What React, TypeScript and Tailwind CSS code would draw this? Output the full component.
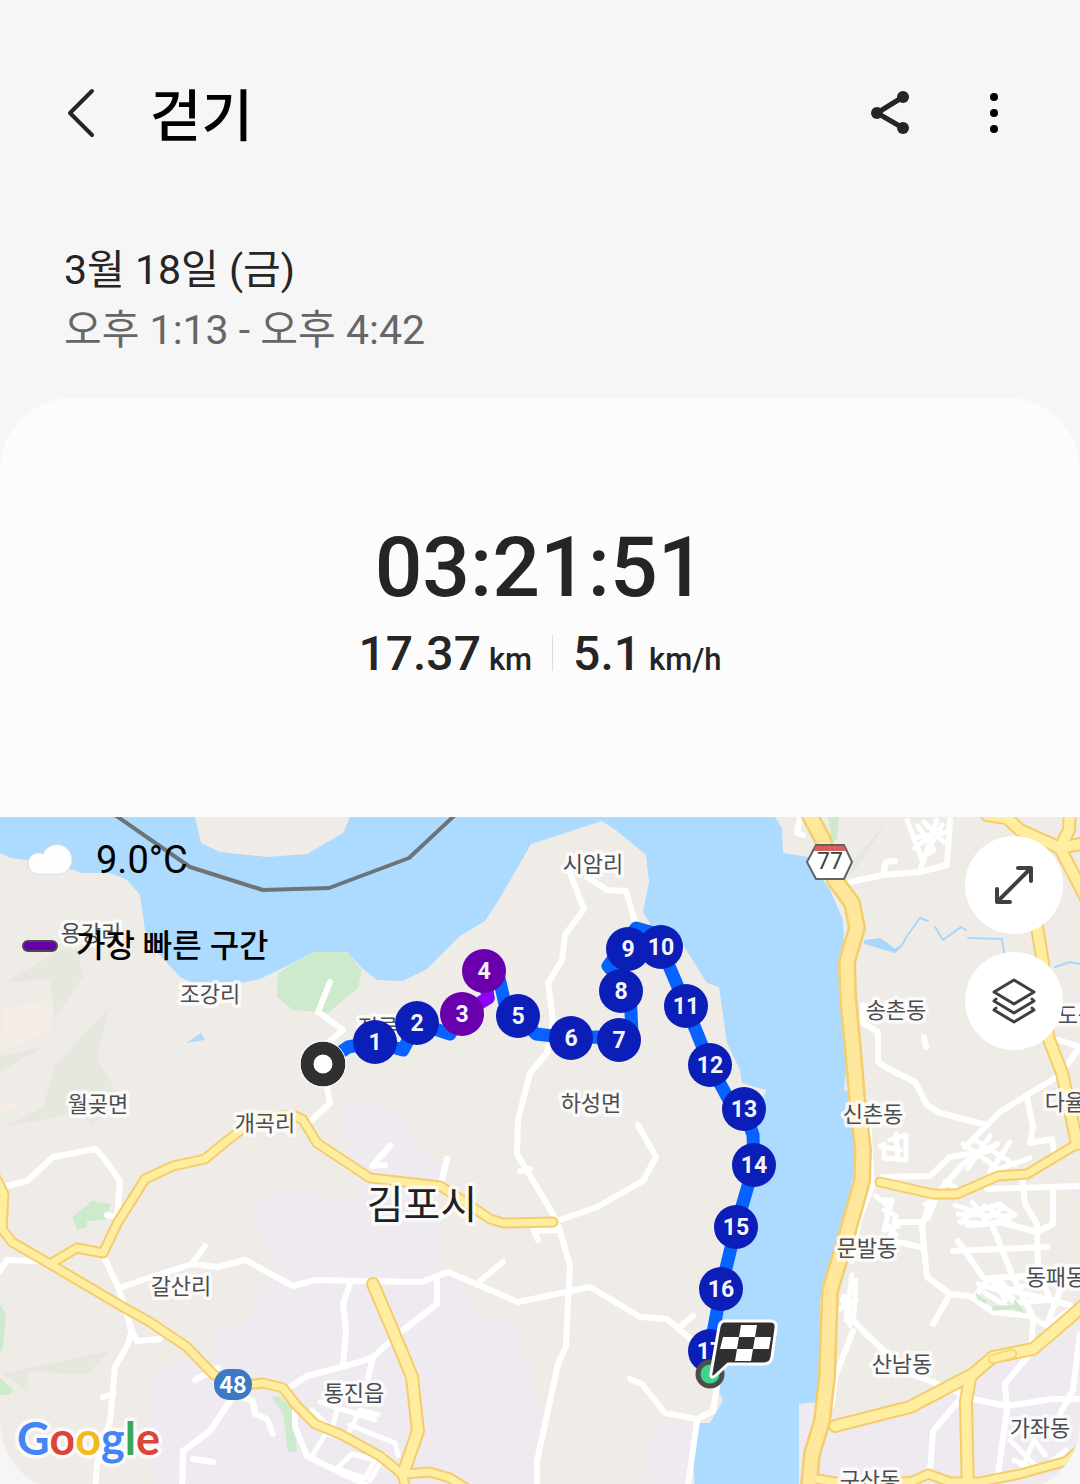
import React from 'react';

interface MapLabel {
  text: string;
  x: number;
  y: number;
}

interface Marker {
  km: number;
  x: number;
  y: number;
  fastest?: boolean;
}

const labels: MapLabel[] = [
  { text: '용강리', x: 91, y: 933 },
  { text: '조강리', x: 210, y: 994 },
  { text: '월곶면', x: 98, y: 1104 },
  { text: '개곡리', x: 265, y: 1123 },
  { text: '전류리', x: 388, y: 1027 },
  { text: '시암리', x: 593, y: 864 },
  { text: '하성면', x: 591, y: 1103 },
  { text: '송촌동', x: 896, y: 1010 },
  { text: '신촌동', x: 873, y: 1114 },
  { text: '도곡동', x: 1088, y: 1015 },
  { text: '다율동', x: 1075, y: 1102 },
  { text: '문발동', x: 867, y: 1248 },
  { text: '동패동', x: 1056, y: 1277 },
  { text: '산남동', x: 902, y: 1364 },
  { text: '가좌동', x: 1040, y: 1428 },
  { text: '구산동', x: 870, y: 1480 },
  { text: '갈산리', x: 181, y: 1286 },
  { text: '통진읍', x: 354, y: 1393 },
];

const markers: Marker[] = [
  { km: 1, x: 375, y: 1042 },
  { km: 2, x: 417, y: 1023 },
  { km: 3, x: 462, y: 1014, fastest: true },
  { km: 4, x: 484, y: 971, fastest: true },
  { km: 5, x: 518, y: 1016 },
  { km: 6, x: 571, y: 1038 },
  { km: 7, x: 619, y: 1040 },
  { km: 8, x: 621, y: 991 },
  { km: 10, x: 661, y: 947 },
  { km: 9, x: 628, y: 949 },
  { km: 11, x: 686, y: 1006 },
  { km: 12, x: 710, y: 1065 },
  { km: 13, x: 744, y: 1109 },
  { km: 14, x: 754, y: 1165 },
  { km: 15, x: 736, y: 1227 },
  { km: 16, x: 721, y: 1289 },
  { km: 17, x: 710, y: 1351 },
];

// Small local roads
const minorRoads = [
  'M330 982L318 1012L343 1030L323 1047L327 1087L330 1103L310 1122',
  'M7 1186L27 1181L53 1157L95 1149L102 1156L120 1181L117 1217L107 1215',
  'M0 1271L7 1260L37 1261',
  'M105 1259L118 1287L132 1331L128 1344L115 1367L110 1421L97 1464L95 1493',
  'M103 1397L113 1394',
  'M122 1287L145 1279L192 1264L217 1267L245 1260L293 1286L315 1280L360 1281L422 1282L448 1272L518 1302L590 1287L640 1317L667 1319L693 1341L705 1360',
  'M192 1264L205 1246',
  'M480 1281L503 1262',
  'M130 1328L137 1341L160 1339',
  'M350 1284L343 1304L346 1331L343 1364',
  'M283 1392L307 1376L360 1362L373 1357L402 1331L437 1304L437 1277',
  'M373 1357L368 1378',
  'M230 1401L210 1431L183 1451L182 1493',
  'M195 1380L218 1368',
  'M193 1459L213 1462',
  'M245 1398L253 1401L255 1414L267 1419L273 1434',
  'M295 1407L295 1427L307 1456L360 1482L380 1493',
  'M570 873L584 909L565 935L562 960L548 983L553 1020L547 1053L530 1073L518 1120L517 1154L553 1214L560 1231L570 1266L568 1301L566 1346L558 1364L537 1461L537 1493',
  'M587 877L607 890L626 891L635 922',
  'M557 1221L597 1207L643 1181L656 1157L638 1125',
  'M538 1240L534 1231L560 1230',
  'M520 1171L530 1169',
  'M630 1379L642 1384L665 1413L697 1419L713 1411L718 1380',
  'M697 1421L687 1493',
  'M680 1327L693 1316',
  'M390 1146L372 1166L385 1165',
  'M442 1179L447 1159',
  'M850 882L883 875L920 872L947 865L950 820',
  'M883 875L886 862L895 861',
  'M800 817L797 833L803 835',
  'M863 1005L863 1023L878 1032L878 1062L887 1068L915 1082L927 1105L940 1113L987 1125',
  'M965 1147L1000 1112L1027 1095L1057 1077',
  'M1027 1097L1033 1127L1030 1143L1052 1139L1055 1160',
  'M924 1037L926 1047',
  'M1058 1040L1080 1047L1067 1065',
  'M868 1120L872 1187L858 1222L852 1261',
  'M853 1331L835 1377L832 1405',
  'M850 1317L863 1331L880 1347L910 1374L933 1382L962 1394',
  'M895 1222L923 1222M893 1241L920 1247',
  'M930 1202L922 1227L927 1277L950 1294L970 1296L993 1312L1030 1316L1047 1326L1070 1310',
  'M950 1294L933 1324',
  'M883 1177L930 1176L950 1157L987 1151',
  'M937 1194L963 1164L997 1144',
  'M1022 1177L1025 1204L1037 1224L1038 1267L1050 1300',
  'M987 1189L1080 1186M1053 1190L1053 1224L1037 1232L1000 1222',
  'M993 1227L1013 1277L1033 1317L1032 1341',
  'M953 1251L1047 1247M958 1241L983 1277L1010 1290L1070 1305',
  'M975 1296L990 1278L1030 1276M1000 1280L1015 1303L1045 1300M1060 1290L1048 1322',
  'M1027 1357L1005 1384L1007 1411L998 1474',
  'M973 1399L1007 1406L1053 1399L1080 1399',
  'M962 1397L933 1431L930 1471',
  'M1080 1334L1073 1390L1060 1414',
];

// Dense street blocks around the towns
const blockRoads = [
  'M907 820L923 862L937 820M914 838L948 832M920 870L932 835L915 848M928 850L942 825M918 826L934 850L922 858M924 822L944 842',
  'M884 1144L884 1158L906 1160L906 1135L890 1140M880 1146L900 1150M896 1134L898 1160',
  'M876 1196L888 1206L886 1224L896 1235M880 1200L892 1200L884 1230L898 1226M884 1210L896 1216L890 1238',
  'M852 1275L846 1320M856 1280L854 1315L842 1300M838 1310L856 1300M844 1296L850 1326',
  'M955 1205L975 1212L1000 1204L1015 1215L990 1224L960 1222L985 1206L1010 1222L968 1226M958 1214L1008 1216M972 1202L985 1220L1002 1208',
  'M963 1144L1000 1170M975 1140L1015 1165M990 1136L968 1168M1010 1142L990 1172L1030 1158',
  'M925 1204L935 1202L928 1218',
  'M312 1410L335 1432L355 1446M320 1402L375 1420M330 1435L340 1400M345 1440L360 1410L378 1415M350 1425L395 1443L398 1455M312 1456L328 1430M335 1470L352 1454L375 1460L365 1478L340 1470M370 1480L385 1455',
  'M1010 1440L1040 1470L1066 1450M1020 1474L1034 1440L1045 1455M1014 1460L1030 1468',
  'M945 1182L960 1190M985 1293L1005 1305M978 1284L1004 1292L1024 1286M990 1278L1006 1300',
];

const yellowRoads = [
  'M50 1264L77 1248L103 1253L118 1222L145 1179L173 1166L205 1159L223 1144L255 1119L293 1115L303 1120L317 1143L352 1166L370 1178L440 1186L453 1194L490 1219L503 1223L553 1222',
  'M-4 1178L4 1194L2 1229L12 1242L50 1264L123 1307L150 1322L187 1347L213 1374L233 1386L263 1383L283 1388L297 1406L315 1424L340 1434L380 1456L402 1474L408 1496',
  'M880 1182L933 1194L957 1194L998 1176L1027 1174L1077 1144L1090 1138',
  'M817 1479L860 1486L913 1481L928 1474L950 1482L980 1482L1020 1474L1067 1461L1090 1440',
  'M403 1474L430 1472L450 1478L475 1494',
];

const wideRoads = [
  'M373 1284L393 1331L412 1377L418 1431L403 1474',
  'M987 815L1007 818L1020 830L1060 848L1090 842',
  'M1070 810L1069 830L1060 848L1090 906',
  'M1034 900L1037 927L1043 963L1048 1037L1062 1073L1070 1110L1077 1144',
  'M835 1426L910 1407L973 1374L993 1357L1033 1349L1060 1326L1090 1300',
  'M970 1378L966 1401L968 1496',
];

const highway =
  'M808 812L823 840L835 880L852 903L857 928L847 962L848 997L853 1050L857 1097L863 1150L862 1181L848 1231L830 1291L827 1377L822 1421L812 1454L808 1496';

const routePath =
  'M323 1064L348 1047L375 1042L403 1050L417 1023L450 1034L462 1014L488 998L484 971L499 978L505 1004L518 1016L536 1034L571 1038L597 1037L619 1040L632 1034L630 991L608 966L636 928L661 935L661 947L686 1006L710 1065L730 1102L744 1109L753 1135L754 1165L736 1227L721 1289L710 1350L710 1374';

const TrackMap: React.FC = () => (
  <svg
    viewBox="0 817 1080 676"
    className="block h-auto w-full"
    role="img"
    aria-label="김포시"
    fill="none"
    strokeLinejoin="round"
    strokeLinecap="round"
  >
    <rect x="0" y="817" width="1080" height="676" fill="#efece7" />

    {/* Built-up areas */}
    <g fill="#eeeaef">
      <path d="M338 1120L352 1100L385 1108L408 1125L418 1148L440 1165L438 1229L437 1254L450 1270L483 1314L518 1326L520 1361L532 1364L533 1394L543 1407L537 1493H157L147 1421V1391L167 1364L213 1357V1334L250 1321L260 1281L277 1267L257 1237L255 1199L300 1186L320 1197L360 1200L345 1150Z" />
      <path d="M653 1427L697 1422L690 1493H638L645 1470Z" />
      <path d="M799 1404L830 1400L840 1425L960 1375L1035 1350L1080 1330V1493H799Z" />
    </g>

    {/* Hills and parks */}
    <g fill="#e6e7df">
      <path d="M5 982L60 950H78L83 977L55 1018L50 980Z" />
      <path d="M109 1008L97 1058L117 1093L93 1127L80 1113L5 1127L43 1107L55 1065Z" />
      <path d="M0 1057L47 1045L0 1072Z" />
      <path d="M0 1374L110 1351L88 1374L28 1372L27 1392L10 1378Z" />
      <path d="M887 822L853 873L847 867Z" />
    </g>
    <g fill="#f7ede7">
      <path d="M3 1010L47 1000L52 1028L0 1052Z" />
      <path d="M0 1102L23 1105L0 1113Z" />
    </g>

    {/* Han river and estuary */}
    <path
      fill="#addaff"
      d="M0 817V853L10 858L27 860L73 870L82 873H110L127 880L140 895L145 930L158 953L180 977L193 983H240L260 979L293 963L313 952H347L362 968L377 980L403 981L427 969L460 936L485 921L497 903L512 877L531 844L602 821L617 831L646 855L649 882L643 912L662 943L683 945L707 983L719 987L727 1043L740 1070L742 1083L766 1090L760 1110L750 1170L732 1235L720 1290L706 1345L712 1380L723 1400L710 1423H699L693 1457L695 1493H799V1404L815 1402L820 1391V1304L823 1284L843 1227L854 1171L855 1150L850 1093L844 1090L846 1070L842 1010L838 963L844 943L843 920L830 890L808 857L783 853L782 828L775 817Z"
    />
    <path fill="#efece7" d="M195 817L201 843L220 852L267 857L307 854L343 833L350 817Z" />
    <path fill="#addaff" d="M186 1043L201 1033L205 1040Z" />
    <g stroke="#a9d6fb" strokeWidth="2">
      <path d="M865 941L880 939L895 950L902 945L895 952L865 943Z" fill="#a9d6fb" />
      <path d="M902 945L907 936L920 918L928 921M935 927L943 940L961 927L966 930M968 938L1002 939L1004 952" />
      <path d="M1055 967L1070 962L1080 964" />
    </g>

    <g fill="#cdeacd">
      <path d="M278 973L313 952H347L362 970L358 988L328 1013L293 1010L277 997Z" />
      <path d="M0 1304L6 1314L3 1347L0 1354ZM0 1378L13 1390L10 1395H0Z" />
      <path d="M72 1217L92 1201L111 1204L105 1220L87 1221V1227L77 1230Z" />
      <path d="M272 1397L278 1396L292 1407L297 1451L288 1452L283 1414Z" />
      <path d="M828 817H839L837 840L832 843Z" />
    </g>

    {/* Roads */}
    <g stroke="#ffffff" strokeWidth="6">
      {minorRoads.map((d) => (
        <path key={d} d={d} />
      ))}
    </g>
    <g stroke="#ffffff" strokeWidth="5">
      {blockRoads.map((d) => (
        <path key={d} d={d} />
      ))}
    </g>
    <path fill="#cdeacd" d="M975 1292L987 1301L986 1304L977 1299ZM992 1306L1013 1305L1015 1299L1026 1314L1013 1309L993 1311Z" />
    <g stroke="#f4cd6c">
      {yellowRoads.map((d) => (
        <path key={d} d={d} strokeWidth="11" />
      ))}
      {wideRoads.map((d) => (
        <path key={d} d={d} strokeWidth="14" />
      ))}
      <path d={highway} strokeWidth="18" />
    </g>
    <g stroke="#ffeda0">
      {yellowRoads.map((d) => (
        <path key={d} d={d} strokeWidth="7" />
      ))}
      {wideRoads.map((d) => (
        <path key={d} d={d} strokeWidth="10" />
      ))}
      <path d={highway} stroke="#ffe79b" strokeWidth="13" />
    </g>
    <path d="M993 1359L1012 1354" stroke="#f4cd6c" strokeWidth="10" />
    <path d="M993 1359L1012 1354" stroke="#ffeda0" strokeWidth="7" />

    {/* Demarcation line */}
    <path
      d="M115 815L190 867L263 890L329 888L409 858L455 815"
      stroke="#6d7478"
      strokeWidth="4"
    />

    {/* Place names */}
    <g
      fill="#4a4d51"
      stroke="#ffffff"
      strokeOpacity="0.8"
      strokeWidth="7"
      paintOrder="stroke"
      textAnchor="middle"
      fontSize="22"
      fontFamily="'Noto Sans CJK KR', sans-serif"
    >
      {labels.map((label) => (
        <text key={label.text} x={label.x} y={label.y + 8}>
          {label.text}
        </text>
      ))}
      <text x="422" y="1219" fontSize="40" fill="#202124">
        김포시
      </text>
    </g>

    {/* Road shields */}
    <path
      d="M816 845H844L852 862L844 879H816L807 862Z"
      fill="#ffffff"
      stroke="#5f6368"
      strokeWidth="2"
    />
    <path d="M816 846H844L846 851H814Z" fill="#d8605c" />
    <text x="830" y="869" fontSize="23" fill="#3c4043" textAnchor="middle" fontFamily="Roboto, sans-serif">
      77
    </text>
    <rect x="214" y="1369" width="38" height="31" rx="15" fill="#3c78c3" />
    <text x="233" y="1393" fontSize="23" fontWeight="700" fill="#ffffff" textAnchor="middle" fontFamily="'Noto Sans CJK KR', sans-serif">
      48
    </text>

    {/* Walked route */}
    <path d={routePath} stroke="#0763ff" strokeWidth="13" />
    <path d="M462 1014L488 998L484 971" stroke="#8f00ff" strokeWidth="13" />

    <circle cx="323" cy="1064" r="16" fill="#ffffff" stroke="#303030" strokeWidth="13" />
    <circle cx="323" cy="1064" r="23" stroke="#ffffff" strokeWidth="1" />

    <g fontFamily="Roboto, sans-serif" fontSize="23" fontWeight="700" textAnchor="middle">
      {markers.map((marker) => (
        <g key={marker.km}>
          <circle
            cx={marker.x}
            cy={marker.y}
            r="22"
            fill={marker.fastest ? '#6a00ad' : '#0b1fb8'}
          />
          <text x={marker.x} y={marker.y + 8} fill="#f4f4ff">
            {marker.km}
          </text>
        </g>
      ))}
    </g>

    {/* Finish flag */}
    <circle cx="710" cy="1374" r="12" fill="#3cd68b" stroke="#4d4d4d" strokeWidth="5" />
    <path
      d="M725 1321H770Q777 1321 776 1328L772 1357Q771 1364 764 1364H728L715 1376Q710 1379 711 1373L719 1327Q720 1321 725 1321Z"
      fill="#303030"
      stroke="#ffffff"
      strokeWidth="3"
    />
    <path
      d="M741 1325H757L755 1337H739ZM723 1337H739L737 1349H720ZM755 1337H771L769 1349H753ZM737 1349H753L751 1361H735Z"
      fill="#ffffff"
    />

    <text
      x="17"
      y="1455"
      fontSize="45"
      fontWeight="700"
      fontFamily="Lato, sans-serif"
      stroke="#ffffff"
      strokeOpacity="0.8"
      strokeWidth="7"
      paintOrder="stroke"
    >
      <tspan fill="#4285f4">G</tspan>
      <tspan fill="#db4437">o</tspan>
      <tspan fill="#f4b91a">o</tspan>
      <tspan fill="#4285f4">g</tspan>
      <tspan fill="#3aa757">l</tspan>
      <tspan fill="#db4437">e</tspan>
    </text>
  </svg>
);

const CloudIcon: React.FC = () => (
  <svg width="48" height="36" viewBox="0 0 48 36" aria-hidden="true">
    <path
      d="M14.5 32A10.5 10.5 0 1 1 19 12A15 15 0 1 1 37 32Z"
      fill="#fefefe"
      stroke="#dedede"
      strokeWidth="1"
    />
  </svg>
);

const App: React.FC = () => {
  return (
    <div className="flex h-screen flex-col overflow-hidden bg-[#f6f6f6] font-[Roboto,'Noto_Sans_CJK_KR',sans-serif] text-[#252525]">
      <header className="flex h-[226px] shrink-0 items-center justify-between pr-15 pl-12">
        <div className="flex items-center gap-9">
          <button type="button" aria-label="뒤로" className="p-2">
            <svg width="50" height="56" viewBox="0 0 50 56" fill="none">
              <path
                d="M36 6L14 28L36 50"
                stroke="#252525"
                strokeWidth="4"
                strokeLinecap="round"
                strokeLinejoin="round"
              />
            </svg>
          </button>
          <h1 className="pt-2 text-[56px] leading-none font-medium text-black">걷기</h1>
        </div>
        <div className="flex items-center gap-12">
          <button type="button" aria-label="공유" className="p-2">
            <svg width="42" height="44" viewBox="0 0 42 44" fill="#252525">
              <path d="M33 6L7 22L33 37" fill="none" stroke="#252525" strokeWidth="5" />
              <circle cx="33" cy="6" r="6" />
              <circle cx="7" cy="22" r="6" />
              <circle cx="33" cy="37" r="6" />
            </svg>
          </button>
          <button type="button" aria-label="더보기" className="p-2">
            <svg width="36" height="44" viewBox="0 0 36 44" fill="#000000">
              <circle cx="18" cy="6" r="4" />
              <circle cx="18" cy="22" r="4" />
              <circle cx="18" cy="38" r="4" />
            </svg>
          </button>
        </div>
      </header>

      <section className="h-[172px] shrink-0 px-16 pt-[14px] text-[41px] leading-[60px]">
        <p>3월 18일 (금)</p>
        <p className="text-[#666666]">오후 1:13 - 오후 4:42</p>
      </section>

      <main className="shrink-0 overflow-hidden rounded-[72px] bg-[#fcfcfc]">
        <section className="flex h-[419px] flex-col items-center pt-30 font-medium">
          <p className="text-[84px] leading-[100px]">03:21:51</p>
          <div className="flex items-center gap-5 pt-[6px]">
            <p className="flex items-baseline gap-2 text-[48px] leading-[60px]">
              17.37 <span className="text-[31px]">km</span>
            </p>
            <div className="mb-2 h-9 w-px bg-[#dddddd]" />
            <p className="flex items-baseline gap-2 text-[48px] leading-[60px]">
              5.1 <span className="text-[31px]">km/h</span>
            </p>
          </div>
        </section>

        <section className="relative">
          <TrackMap />
          <div className="absolute top-4 left-[22px] flex flex-col gap-8 text-black">
            <div className="flex items-center gap-6 pl-0.5 text-[38px] leading-[54px]">
              <CloudIcon />
              <span>9.0°C</span>
            </div>
            <div className="flex items-center gap-[18px] text-[32px] leading-[54px] font-medium">
              <span className="h-3 w-9 rounded-full border-2 border-[#4a4a4a] bg-[#6a00ad]" />
              <span>가장 빠른 구간</span>
            </div>
          </div>
          <div className="absolute top-[19px] right-[17px] flex flex-col gap-[18px]">
            <button
              type="button"
              aria-label="지도 확대"
              className="flex size-[98px] items-center justify-center rounded-full bg-white"
            >
              <svg
                width="44"
                height="44"
                viewBox="0 0 44 44"
                fill="none"
                stroke="#404040"
                strokeWidth="4"
                strokeLinecap="round"
                strokeLinejoin="round"
              >
                <path d="M6 38L38 6M26 5H39V18M5 26V39H18" />
              </svg>
            </button>
            <button
              type="button"
              aria-label="지도 유형"
              className="flex size-[98px] items-center justify-center rounded-full bg-white"
            >
              <svg
                width="48"
                height="48"
                viewBox="0 0 48 48"
                fill="none"
                stroke="#404040"
                strokeWidth="3"
                strokeLinecap="round"
                strokeLinejoin="round"
              >
                <path d="M24 3L44 15L24 27L4 15Z" />
                <path d="M6 22L4 24L24 36L44 24L42 22" />
                <path d="M6 31L4 33L24 45L44 33L42 31" />
              </svg>
            </button>
          </div>
        </section>
      </main>
    </div>
  );
};

export default App;
